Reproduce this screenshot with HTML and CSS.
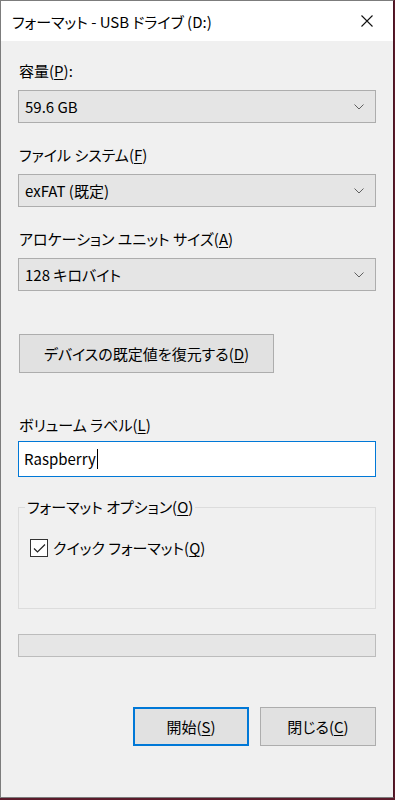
FILE: index.html
```html
<!DOCTYPE html>
<html lang="ja">
<head>
    <meta charset="UTF-8">
    <meta name="viewport" content="width=device-width, initial-scale=1.0">
    <title>フォーマット - USB ドライブ (D:)</title>
    <link rel="stylesheet" href="styles.css">
</head>
<body>
    <div class="window">
        <div class="titlebar">
            <span class="title">フォーマット - USB ドライブ (D:)</span>
            <svg class="close" width="12" height="12" viewBox="0 0 12 12">
                <path d="M0.5 0.5 L11.5 11.5 M11.5 0.5 L0.5 11.5" stroke="#111" stroke-width="1.1" fill="none"/>
            </svg>
        </div>

        <div class="content">
            <div class="label">容量(<u>P</u>):</div>
            <div class="combo">
                <span>59.6 GB</span>
                <svg class="chev" width="10" height="6" viewBox="0 0 10 6"><path d="M0.5 0.5 L5 5 L9.5 0.5" stroke="#606060" fill="none"/></svg>
            </div>

            <div class="label gap">ファイル システム(<u>F</u>)</div>
            <div class="combo">
                <span>exFAT (既定)</span>
                <svg class="chev" width="10" height="6" viewBox="0 0 10 6"><path d="M0.5 0.5 L5 5 L9.5 0.5" stroke="#606060" fill="none"/></svg>
            </div>

            <div class="label gap">アロケーション ユニット サイズ(<u>A</u>)</div>
            <div class="combo">
                <span>128 キロバイト</span>
                <svg class="chev" width="10" height="6" viewBox="0 0 10 6"><path d="M0.5 0.5 L5 5 L9.5 0.5" stroke="#606060" fill="none"/></svg>
            </div>

            <button class="btn restore">デバイスの既定値を復元する(<u>D</u>)</button>

            <div class="label vol">ボリューム ラベル(<u>L</u>)</div>
            <div class="textbox">Raspberry<span class="caret"></span></div>

            <fieldset class="group">
                <legend>フォーマット オプション(<u>O</u>)</legend>
                <div class="check">
                    <span class="box">
                        <svg width="13" height="11" viewBox="0 0 13 11"><path d="M1 5.5 L4.5 9 L12 1.5" stroke="#222" stroke-width="1.2" fill="none"/></svg>
                    </span>
                    <span>クイック フォーマット(<u>Q</u>)</span>
                </div>
            </fieldset>

            <div class="progress"></div>

            <div class="actions">
                <button class="btn primary">開始(<u>S</u>)</button>
                <button class="btn">閉じる(<u>C</u>)</button>
            </div>
        </div>
    </div>
</body>
</html>
```

FILE: styles.css
```css
* {
    margin: 0;
    padding: 0;
    box-sizing: border-box;
}
body {
    width: 395px;
    height: 800px;
    background: #5a1a2a;
    font-family: "Noto Sans CJK JP", "Noto Sans", sans-serif;
    font-size: 15px;
    font-feature-settings: "palt";
    color: #000;
}
.window {
    width: 394px;
    height: 798px;
    border: 1px solid #7c7c7c;
    border-right-color: #4a1422;
    background: #f0f0f0;
    display: flex;
    flex-direction: column;
}
.titlebar {
    height: 40px;
    background: #fff;
    display: flex;
    align-items: center;
    justify-content: space-between;
    padding: 0 20px 0 11px;
}
.title {
    font-size: 15px;
    line-height: 20px;
    margin-top: 1px;
}
.content {
    padding: 20px 17px 0 17px;
    display: flex;
    flex-direction: column;
}
.label {
    line-height: 20px;
    padding-left: 1px;
    margin-bottom: 9px;
}
.label.gap {
    margin-top: 22px;
}
u {
    text-decoration: underline;
    text-underline-offset: 2px;
    text-decoration-thickness: 1px;
}
.combo {
    height: 33px;
    border: 1px solid #adadad;
    background: #e5e5e5;
    display: flex;
    align-items: center;
    justify-content: space-between;
    padding: 0 11px 0 6px;
    line-height: 20px;
}
.btn {
    font-family: inherit;
    font-size: 15px;
    font-feature-settings: "palt";
    color: #000;
    background: #e1e1e1;
    border: 1px solid #adadad;
    height: 39px;
    line-height: 20px;
}
.restore {
    margin-top: 43px;
    margin-left: 1px;
    width: 255px;
}
.label.vol {
    margin-top: 42px;
    margin-bottom: 6px;
}
.textbox {
    height: 36px;
    background: #fff;
    border: 1px solid #0078d7;
    padding-left: 5px;
    line-height: 20px;
    display: flex;
    align-items: center;
}
.caret {
    display: inline-block;
    width: 1px;
    height: 20px;
    background: #000;
    margin-left: 1px;
}
.group {
    margin-top: 20px;
    height: 112px;
    border: 1px solid #dcdcdc;
    padding: 0 0 0 11px;
    min-width: 0;
}
.group legend {
    line-height: 20px;
    padding: 0 2px;
    margin-left: -5px;
}
.check {
    display: flex;
    align-items: center;
    gap: 5px;
    margin-top: 21px;
    line-height: 20px;
}
.box {
    width: 18px;
    height: 18px;
    border: 1px solid #333;
    background: #fff;
    display: flex;
    align-items: center;
    justify-content: center;
}
.progress {
    margin-top: 25px;
    height: 23px;
    background: #e6e6e6;
    border: 1px solid #bcbcbc;
}
.actions {
    margin-top: 50px;
    display: flex;
    justify-content: flex-end;
    gap: 11px;
}
.actions .btn {
    width: 116px;
}
.actions .primary {
    border: 2px solid #0078d7;
}
```
